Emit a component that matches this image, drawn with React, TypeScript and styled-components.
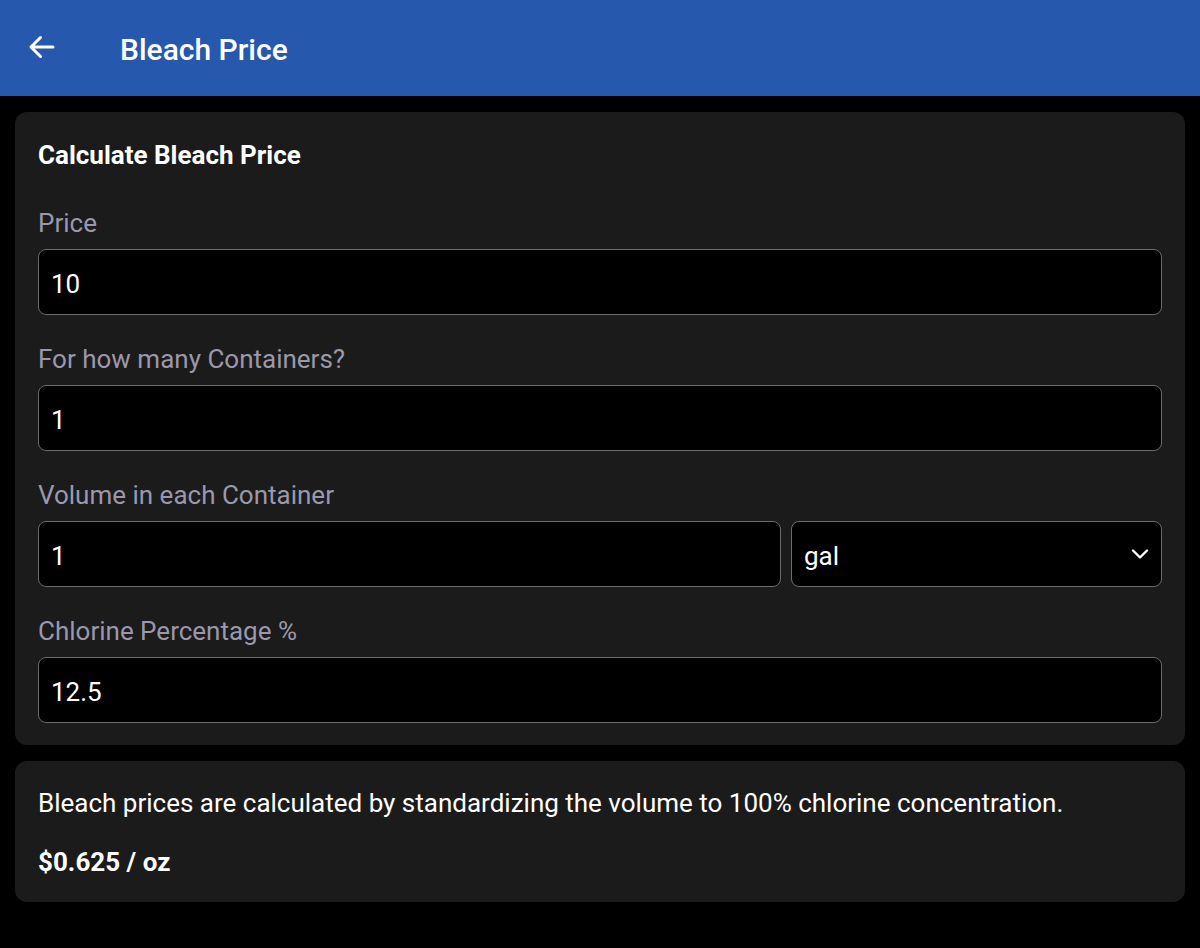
import styled, { createGlobalStyle } from 'styled-components';

const GlobalStyle = createGlobalStyle`
  html, body {
    margin: 0;
    padding: 0;
    background: #000000;
    font-family: Roboto, "Liberation Sans", sans-serif;
  }
  * {
    box-sizing: border-box;
  }
`;

const Page = styled.div`
  display: flex;
  flex-direction: column;
  min-height: 948px;
  background: #000000;
`;

const TopBar = styled.header`
  display: flex;
  align-items: center;
  height: 96px;
  padding: 2px 0 0 26px;
  background: #2659ae;
`;

const BackButton = styled.button`
  display: flex;
  align-items: center;
  justify-content: center;
  width: 30px;
  height: 30px;
  margin-top: -4px;
  padding: 0;
  border: none;
  background: transparent;
  color: #ffffff;
  cursor: pointer;
`;

const TopTitle = styled.h1`
  margin: 0 0 0 64px;
  font-size: 30px;
  font-weight: 500;
  color: #ffffff;
`;

const Content = styled.main`
  display: flex;
  flex-direction: column;
  gap: 16px;
  padding: 16px 15px;
`;

const Card = styled.section<{ $pad?: string }>`
  display: flex;
  flex-direction: column;
  padding: ${({ $pad }) => $pad || '27px 23px 22px'};
  border-radius: 12px;
  background: #1b1b1b;
`;

const CardTitle = styled.h2`
  margin: 0 0 36px;
  font-size: 26px;
  line-height: 32px;
  font-weight: 700;
  color: #ffffff;
`;

const Fields = styled.div`
  display: flex;
  flex-direction: column;
  gap: 28px;
`;

const Field = styled.div`
  display: flex;
  flex-direction: column;
  gap: 10px;
`;

const Label = styled.label`
  font-size: 26px;
  line-height: 32px;
  color: #9b98ab;
`;

const Row = styled.div`
  display: flex;
  gap: 10px;
`;

const Input = styled.input`
  width: 100%;
  height: 66px;
  padding: 3px 12px 0;
  border: 1px solid #6b6b6b;
  border-radius: 8px;
  background: #000000;
  color: #ffffff;
  font-family: inherit;
  font-size: 26px;
  outline: none;
`;

const SelectBox = styled.div`
  position: relative;
  flex: 0 0 371px;
`;

const Select = styled.select`
  width: 100%;
  height: 66px;
  padding: 3px 12px 0;
  border: 1px solid #6b6b6b;
  border-radius: 8px;
  background: #000000;
  color: #ffffff;
  font-family: inherit;
  font-size: 26px;
  appearance: none;
  outline: none;
`;

const Chevron = styled.svg`
  position: absolute;
  right: 10px;
  top: 50%;
  transform: translateY(-50%);
  pointer-events: none;
`;

const Note = styled.p`
  margin: 0;
  font-size: 26px;
  line-height: 32px;
  color: #ffffff;
`;

const Result = styled.p`
  margin: 27px 0 0;
  font-size: 26px;
  line-height: 32px;
  font-weight: 700;
  color: #ffffff;
`;

const fields = [
  { label: 'Price', value: '10' },
  { label: 'For how many Containers?', value: '1' },
];

export default function App() {
  return (
    <>
      <GlobalStyle />
      <Page>
        <TopBar>
          <BackButton aria-label="Back">
            <svg width="28" height="28" viewBox="0 0 28 28" fill="none">
              <path
                d="M26 14H4M13.5 4.5L4 14l9.5 9.5"
                stroke="#ffffff"
                strokeWidth="3"
                strokeLinecap="round"
                strokeLinejoin="round"
              />
            </svg>
          </BackButton>
          <TopTitle>Bleach Price</TopTitle>
        </TopBar>
        <Content>
          <Card>
            <CardTitle>Calculate Bleach Price</CardTitle>
            <Fields>
              {fields.map((f) => (
                <Field key={f.label}>
                  <Label>{f.label}</Label>
                  <Input defaultValue={f.value} />
                </Field>
              ))}
              <Field>
                <Label>Volume in each Container</Label>
                <Row>
                  <Input defaultValue="1" />
                  <SelectBox>
                    <Select defaultValue="gal">
                      <option value="gal">gal</option>
                      <option value="l">L</option>
                      <option value="oz">oz</option>
                    </Select>
                    <Chevron width="24" height="24" viewBox="0 0 24 24" fill="none">
                      <path
                        d="M5 8.5l7 7 7-7"
                        stroke="#ffffff"
                        strokeWidth="2.4"
                        strokeLinecap="round"
                        strokeLinejoin="round"
                      />
                    </Chevron>
                  </SelectBox>
                </Row>
              </Field>
              <Field>
                <Label>Chlorine Percentage %</Label>
                <Input defaultValue="12.5" />
              </Field>
            </Fields>
          </Card>
          <Card $pad="26px 23px 24px">
            <Note>
              Bleach prices are calculated by standardizing the volume to 100% chlorine concentration.
            </Note>
            <Result>$0.625 / oz</Result>
          </Card>
        </Content>
      </Page>
    </>
  );
}
